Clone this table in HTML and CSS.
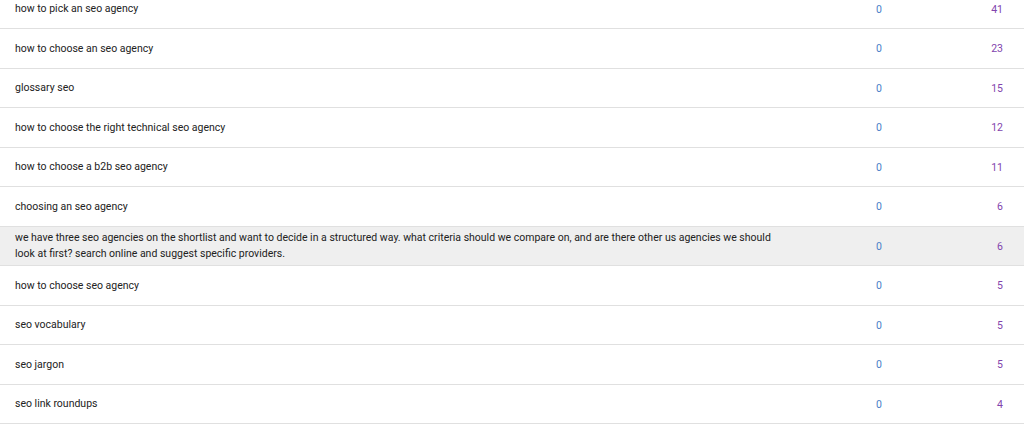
FILE: index.html
```html
<!DOCTYPE html>
<html lang="en">
<head>
<meta charset="utf-8">
<title>Queries</title>
<link rel="stylesheet" href="styles.css">
</head>
<body>
<div class="table">
  <div class="row"><div class="q">how to pick an seo agency</div><div class="a">0</div><div class="b">41</div></div>
  <div class="row"><div class="q">how to choose an seo agency</div><div class="a">0</div><div class="b">23</div></div>
  <div class="row"><div class="q">glossary seo</div><div class="a">0</div><div class="b">15</div></div>
  <div class="row"><div class="q">how to choose the right technical seo agency</div><div class="a">0</div><div class="b">12</div></div>
  <div class="row"><div class="q">how to choose a b2b seo agency</div><div class="a">0</div><div class="b">11</div></div>
  <div class="row"><div class="q">choosing an seo agency</div><div class="a">0</div><div class="b">6</div></div>
  <div class="row hl"><div class="q">we have three seo agencies on the shortlist and want to decide in a structured way. what criteria should we compare on, and are there other us agencies we should look at first? search online and suggest specific providers.</div><div class="a">0</div><div class="b">6</div></div>
  <div class="row"><div class="q">how to choose seo agency</div><div class="a">0</div><div class="b">5</div></div>
  <div class="row"><div class="q">seo vocabulary</div><div class="a">0</div><div class="b">5</div></div>
  <div class="row"><div class="q">seo jargon</div><div class="a">0</div><div class="b">5</div></div>
  <div class="row"><div class="q">seo link roundups</div><div class="a">0</div><div class="b">4</div></div>
</div>
</body>
</html>
```
FILE: styles.css
```css
html, body {
  margin: 0;
  padding: 0;
  background: #ffffff;
}
body {
  font-family: Roboto, "Liberation Sans", Arial, sans-serif;
  font-size: 10.5px;
  color: #222222;
  overflow: hidden;
}
.table {
  margin-top: -10.5px;
}
.row {
  display: grid;
  grid-template-columns: 839px 80px 105px;
  align-items: center;
  box-sizing: border-box;
  height: 39.5px;
  border-bottom: 1px solid #e0e0e0;
}
.row.hl {
  background: #efefef;
}
.q {
  padding-left: 15px;
  padding-right: 54px;
  line-height: 16px;
  padding-top: 1px;
}
.a {
  text-align: center;
  color: #4a80c8;
  padding-top: 1px;
}
.b {
  text-align: right;
  padding-right: 21px;
  color: #8244ad;
  padding-top: 1px;
}
```
